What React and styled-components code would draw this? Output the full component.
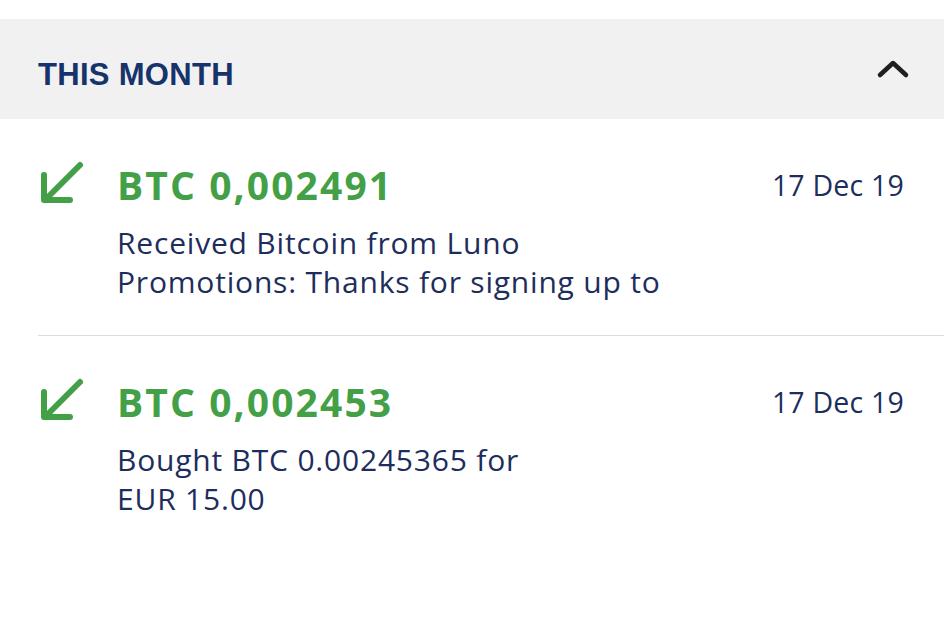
import React from "react";
import styled, { createGlobalStyle } from "styled-components";

const GlobalStyle = createGlobalStyle`
  body {
    margin: 0;
    background: #fff;
    font-family: "Open Sans", "Liberation Sans", sans-serif;
  }
`;

const Page = styled.div`
  width: 944px;
  height: 629px;
  padding-top: 19px;
  box-sizing: border-box;
  background: #fff;
  overflow: hidden;
`;

const SectionHeader = styled.div`
  height: 100px;
  background: #f1f1f1;
  display: flex;
  align-items: center;
  justify-content: space-between;
  padding: 0 34px 0 38px;
`;

const SectionTitle = styled.h2`
  margin: 0;
  font-family: "Liberation Sans", sans-serif;
  font-weight: 700;
  font-size: 31px;
  letter-spacing: 0.3px;
  color: #17336b;
  padding-top: 12px;
`;

const List = styled.div`
  padding-left: 38px;
`;

const Row = styled.div`
  display: flex;
  align-items: flex-start;
  padding: 43px 40px 34px 0;
  border-bottom: ${(p) => (p.$divider ? "1px solid #dcdcdc" : "none")};
`;

const IconBox = styled.div`
  width: 79px;
  flex-shrink: 0;
  margin-top: -3px;
`;

const Content = styled.div`
  flex: 1;
`;

const Amount = styled.div`
  font-weight: 700;
  font-size: 39px;
  line-height: 46px;
  letter-spacing: 2.1px;
  color: #43a047;
`;

const Description = styled.div`
  margin-top: 15px;
  font-size: 30px;
  line-height: 39px;
  letter-spacing: 0.8px;
  color: #1d2d5c;
`;

const DateLabel = styled.div`
  font-size: 28.5px;
  line-height: 46px;
  letter-spacing: 0.2px;
  color: #1d2d5c;
`;

const ArrowIcon = () => (
  <svg width="48" height="48" viewBox="0 0 48 48" fill="none">
    <path
      d="M42 6 L7 41 M6 16 V41 H32"
      stroke="#43a047"
      strokeWidth="6"
      strokeLinecap="round"
      strokeLinejoin="round"
    />
  </svg>
);

const Chevron = () => (
  <svg width="34" height="20" viewBox="0 0 34 20" fill="none">
    <path
      d="M4 16 L17 4 L30 16"
      stroke="#1f1f1f"
      strokeWidth="4.5"
      strokeLinecap="round"
      strokeLinejoin="round"
    />
  </svg>
);

const transactions = [
  {
    amount: "BTC 0,002491",
    date: "17 Dec 19",
    lines: ["Received Bitcoin from Luno", "Promotions: Thanks for signing up to"],
  },
  {
    amount: "BTC 0,002453",
    date: "17 Dec 19",
    lines: ["Bought BTC 0.00245365 for", "EUR 15.00"],
  },
];

const App = () => {
  return (
    <Page>
      <GlobalStyle />
      <SectionHeader>
        <SectionTitle>THIS MONTH</SectionTitle>
        <Chevron />
      </SectionHeader>
      <List>
        {transactions.map((t, i) => (
          <Row key={i} $divider={i < transactions.length - 1}>
            <IconBox>
              <ArrowIcon />
            </IconBox>
            <Content>
              <Amount>{t.amount}</Amount>
              <Description>
                {t.lines.map((l) => (
                  <div key={l}>{l}</div>
                ))}
              </Description>
            </Content>
            <DateLabel>{t.date}</DateLabel>
          </Row>
        ))}
      </List>
    </Page>
  );
};

export default App;
